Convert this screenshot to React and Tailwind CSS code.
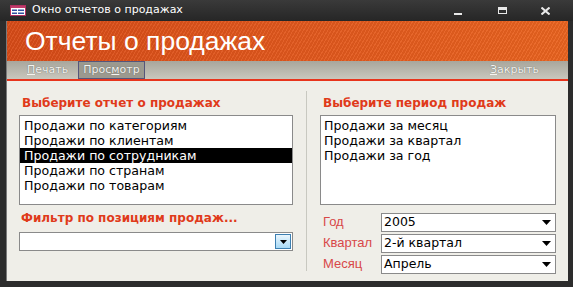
import React from "react";

function Arrow() {
  return (
    <svg width="9" height="5" viewBox="0 0 9 5">
      <path d="M0 0H9L4.5 5Z" fill="#000" />
    </svg>
  );
}

function Combo({ value }) {
  return (
    <div className="flex h-[19px] w-[175px] items-center justify-between border border-[#8a8a8a] bg-white pl-[2px] pr-[4px]">
      <span className="text-[12.5px] leading-none text-black">{value}</span>
      <Arrow />
    </div>
  );
}

export default function App() {
  const reports = [
    "Продажи по категориям",
    "Продажи по клиентам",
    "Продажи по сотрудникам",
    "Продажи по странам",
    "Продажи по товарам",
  ];
  const periods = ["Продажи за месяц", "Продажи за квартал", "Продажи за год"];
  return (
    <div className="flex h-[287px] w-[573px] flex-col bg-[#2c2c2c] font-['DejaVu_Sans',Verdana,sans-serif]">
      {/* title bar */}
      <div className="flex h-[21px] items-center bg-gradient-to-b from-[#3a3a3a] to-[#262626] pl-[10px]">
        <svg width="16" height="11" viewBox="0 0 16 11" className="mr-[6px]">
          <rect x="0.5" y="0.5" width="15" height="10" fill="#fff" stroke="#b03060" />
          <rect x="1" y="1" width="14" height="2" fill="#c03a6a" />
          <rect x="2" y="4.5" width="5" height="1.5" fill="#3050a0" />
          <rect x="8" y="4.5" width="6" height="1.5" fill="#3050a0" />
          <rect x="2" y="7.5" width="5" height="1.5" fill="#3050a0" />
          <rect x="8" y="7.5" width="6" height="1.5" fill="#3050a0" />
        </svg>
        <span className="text-[11px] text-white">Окно отчетов о продажах</span>
        <div className="ml-auto flex items-center pr-[5px]">
          <div className="flex w-[44px] justify-center"><div className="mt-[6px] h-[2px] w-[8px] bg-[#e8e8e8]" /></div>
          <div className="flex w-[44px] justify-center"><div className="h-[7px] w-[9px] border border-t-[3px] border-[#e8e8e8]" /></div>
          <div className="flex w-[44px] justify-center pr-[2px]">
            <svg width="9" height="8" viewBox="0 0 9 8"><path d="M0.5 0.5L8.5 7.5M8.5 0.5L0.5 7.5" stroke="#e8e8e8" strokeWidth="2" /></svg>
          </div>
        </div>
      </div>
      {/* frame */}
      <div className="flex flex-1 pb-[6px] pl-[6px] pr-[5px]">
        <div className="flex flex-1 flex-col border-l border-[#7a7a7a] bg-[#efeee8]">
          <div className="flex h-[40px] items-center bg-[repeating-linear-gradient(120deg,rgba(255,255,255,0.06)_0_1px,rgba(0,0,0,0.05)_1px_3px),linear-gradient(90deg,#d84c18_0%,#e35a1e_60%,#ea6420_100%)] pl-[18px]">
            <span className="font-['Liberation_Sans',Arial,sans-serif] text-[26.5px] leading-none text-white">
              Отчеты о продажах
            </span>
          </div>
          <div className="flex h-[20px] items-center border-b-[2px] border-[#e8341c] bg-gradient-to-b from-[#a8a69c] to-[#c9c7bd] pl-[20px] pr-[29px] text-[11px] text-[#f4f4f0]">
            <span className="[text-shadow:0_0_1px_#555]"><u>П</u>ечать</span>
            <span className="ml-[10px] flex h-[18px] items-center border border-[#55557a] bg-[#9b998f] px-[4px] [text-shadow:0_0_1px_#555]">Прос<u>м</u>отр</span>
            <span className="ml-auto [text-shadow:0_0_1px_#555]"><u>З</u>акрыть</span>
          </div>
          <div className="flex flex-1">
            <div className="flex w-[299px] flex-col pl-[12px] pt-[15px]">
              <div className="pl-[3px] text-[12px] font-bold leading-[14px] text-[#e03a1a]">Выберите отчет о продажах</div>
              <div className="mt-[5px] h-[90px] w-[274px] border border-[#8a8a8a] bg-white pt-[2px]">
                {reports.map((r, i) => (
                  <div
                    key={r}
                    className={`h-[15px] pl-[4px] text-[12.6px] leading-[15px] ${i === 2 ? "bg-black text-white" : "text-black"}`}
                  >
                    {r}
                  </div>
                ))}
              </div>
              <div className="mt-[6px] pl-[2px] text-[12px] font-bold leading-[14px] text-[#e03a1a]">Фильтр по позициям продаж...</div>
              <div className="mt-[7px] flex h-[19px] w-[274px] items-center justify-end border border-[#8a8a8a] bg-white pr-[1px]">
                <div className="flex h-[15px] w-[16px] items-center justify-center border border-[#3c7fb1] bg-gradient-to-b from-[#eaf6fd] to-[#a7d9f5]">
                  <svg width="7" height="4" viewBox="0 0 7 4"><path d="M0 0H7L3.5 4Z" fill="#000" /></svg>
                </div>
              </div>
            </div>
            <div className="mt-[10px] mb-[10px] w-px bg-[#c8c8c0]" />
            <div className="flex flex-col pl-[13px] pt-[15px]">
              <div className="pl-[3px] text-[12px] font-bold leading-[14px] text-[#e03a1a]">Выберите период продаж</div>
              <div className="mt-[5px] h-[90px] w-[236px] border border-[#8a8a8a] bg-white pt-[2px]">
                {periods.map((r) => (
                  <div key={r} className="h-[15px] pl-[3px] text-[12.6px] leading-[15px] text-black">{r}</div>
                ))}
              </div>
              <div className="mt-[8px] flex flex-col gap-[2px] pl-[3px]">
                {[
                  ["Год", "2005"],
                  ["Квартал", "2-й квартал"],
                  ["Месяц", "Апрель"],
                ].map(([l, v]) => (
                  <div key={l} className="flex h-[19px] items-center">
                    <span className="w-[58px] pb-[3px] font-['Liberation_Sans',Arial,sans-serif] text-[13px] leading-[15px] text-[#d84848]">{l}</span>
                    <Combo value={v} />
                  </div>
                ))}
              </div>
            </div>
          </div>
        </div>
      </div>
    </div>
  );
}
